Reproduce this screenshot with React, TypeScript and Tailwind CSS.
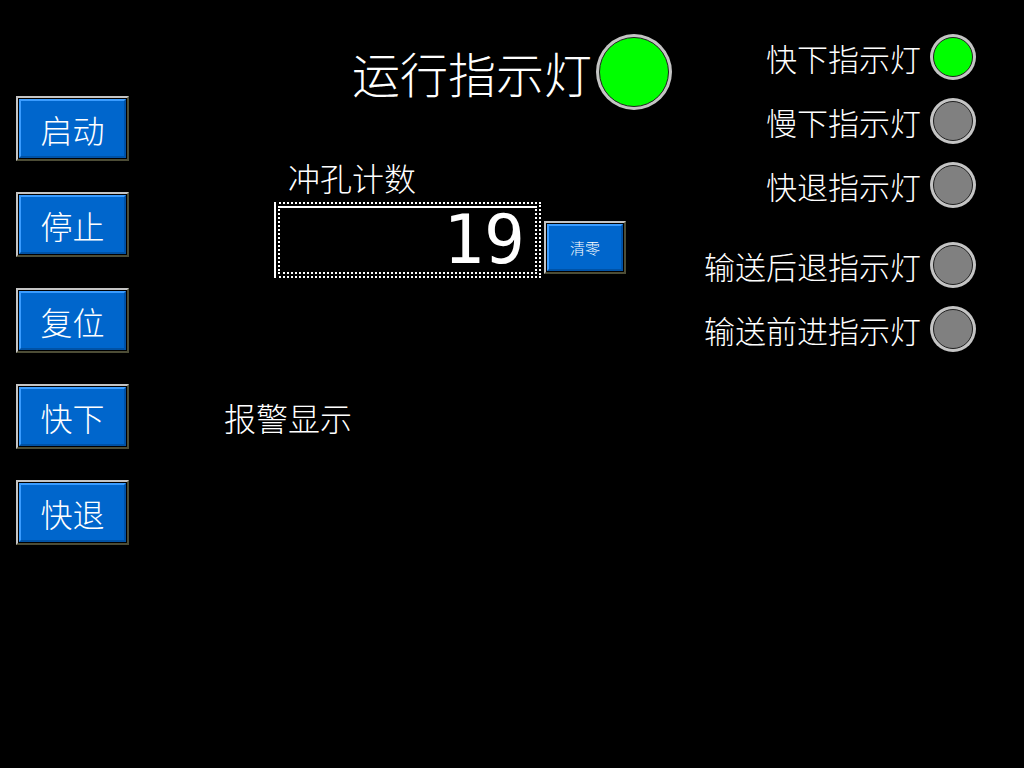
import React from 'react';

const font = { fontFamily: '"Noto Sans CJK SC", "Noto Sans", sans-serif' };

const HmiButton: React.FC<{ label: string }> = ({ label }) => (
    <button className="w-[113px] h-[65px] border-2 border-t-[#c4c4c4] border-l-[#c4c4c4] border-r-[#4d4d36] border-b-[#4d4d36] bg-black p-px">
        <div className="w-full h-full bg-[#0066cc] border-2 border-t-[#3a9cff] border-l-[#3a9cff] border-r-[#0052a6] border-b-[#0052a6] flex items-center justify-center text-white text-[32px] leading-none font-light">
            {label}
        </div>
    </button>
);

const Lamp: React.FC<{ on?: boolean; size: string }> = ({ on, size }) => (
    <div className={`${size} rounded-full bg-[#c4c4c4] p-[3px] shrink-0`}>
        <div className={`w-full h-full rounded-full border border-[#202020] ${on ? 'bg-[#00ff00]' : 'bg-[#808080]'}`} />
    </div>
);

export default function App() {
    const lamps = [
        { name: '快下指示灯', on: true, gap: false },
        { name: '慢下指示灯', on: false, gap: false },
        { name: '快退指示灯', on: false, gap: false },
        { name: '输送后退指示灯', on: false, gap: true },
        { name: '输送前进指示灯', on: false, gap: false },
    ];

    return (
        <div className="w-[1024px] h-[768px] bg-black text-white font-light flex overflow-hidden" style={font}>
            {/* left buttons */}
            <div className="pl-4 pt-[96px] flex flex-col gap-[31px]">
                {['启动', '停止', '复位', '快下', '快退'].map((b) => (
                    <HmiButton key={b} label={b} />
                ))}
            </div>

            {/* middle */}
            <div className="ml-[95px] pt-[34px] flex flex-col">
                <div className="ml-[128px] flex items-center gap-[4px]">
                    <span className="text-[48px] leading-none">运行指示灯</span>
                    <Lamp on size="w-[76px] h-[76px]" />
                </div>
                <div className="ml-[64px] mt-[51px] text-[32px] leading-none">冲孔计数</div>
                <div className="ml-[50px] mt-[9px] flex items-start gap-[3px]">
                    <div className="w-[267px] h-[76px] border-2 border-dotted border-white [border-left-style:solid] p-[2px]">
                        <div className="w-full h-full border-2 border-dotted border-white [border-top-style:solid] flex items-center justify-end pr-[10px]">
                            <span className="text-[68px] leading-none" style={{ fontFamily: '"DejaVu Sans Mono", monospace' }}>19</span>
                        </div>
                    </div>
                    <button className="mt-[19px] w-[82px] h-[53px] border-2 border-t-[#c4c4c4] border-l-[#c4c4c4] border-r-[#4d4d36] border-b-[#4d4d36] bg-black p-px">
                        <div className="w-full h-full bg-[#0066cc] border-2 border-t-[#3a9cff] border-l-[#3a9cff] border-r-[#0052a6] border-b-[#0052a6] flex items-center justify-center text-white text-[15px] leading-none">
                            清零
                        </div>
                    </button>
                </div>
                <div className="mt-[123px] text-[32px] leading-none">报警显示</div>
            </div>

            {/* right lamps */}
            <div className="ml-auto pr-[48px] pt-[25px] flex flex-col items-end">
                {lamps.map((l) => (
                    <div key={l.name} className={`h-[64px] flex items-center gap-[9px] ${l.gap ? 'mt-4' : ''}`}>
                        <span className="text-[31px] leading-none">{l.name}</span>
                        <Lamp on={l.on} size="w-[46px] h-[46px]" />
                    </div>
                ))}
            </div>
        </div>
    );
}
